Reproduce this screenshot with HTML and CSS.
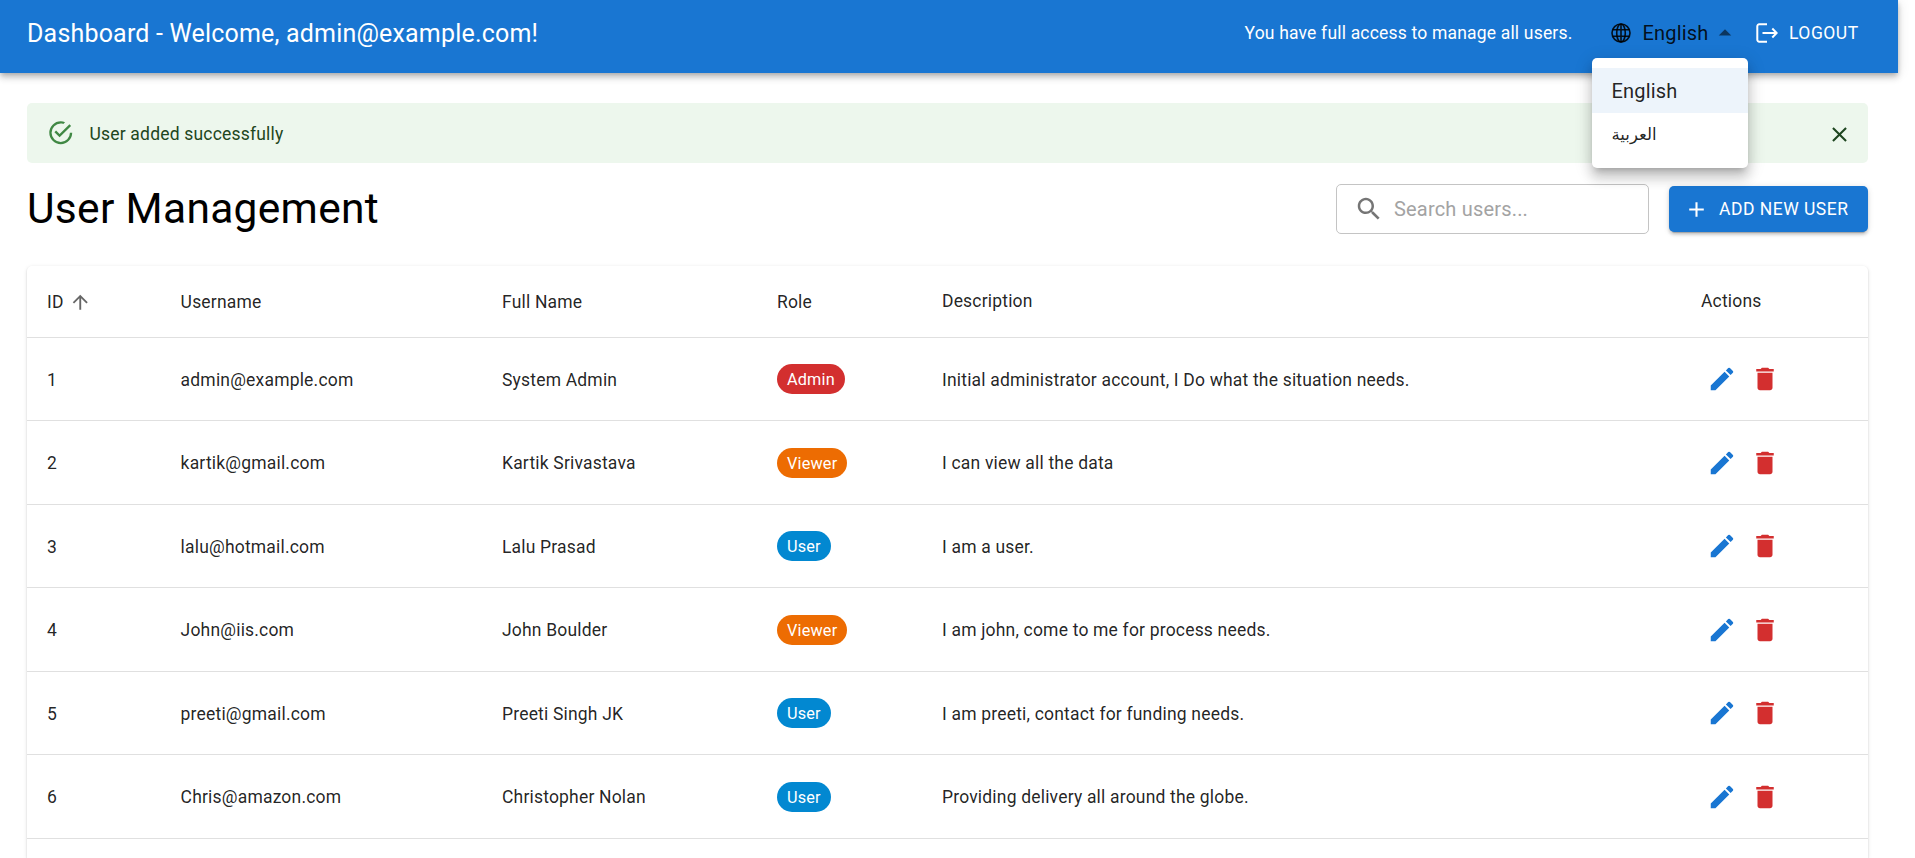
FILE: index.html
```html
<!DOCTYPE html>
<html lang="en">
<head>
<meta charset="utf-8">
<title>Dashboard</title>
<link rel="stylesheet" href="styles.css">
</head>
<body>
<svg class="defs" aria-hidden="true">
  <symbol id="edit" viewBox="0 0 24 24"><path d="M3 17.25V21h3.75L17.81 9.94l-3.75-3.75zM20.71 7.04c.39-.39.39-1.02 0-1.41l-2.34-2.34a.9959.9959 0 0 0-1.41 0l-1.83 1.83 3.75 3.75z"/></symbol>
  <symbol id="delete" viewBox="0 0 24 24"><path d="M6 19c0 1.1.9 2 2 2h8c1.1 0 2-.9 2-2V7H6zM19 4h-3.500l-1-1h-5l-1 1H5v2h14z"/></symbol>
</svg>
<header class="appbar">
  <h6 class="appbar-title">Dashboard - Welcome, admin@example.com!</h6>
  <p class="appbar-note">You have full access to manage all users.</p>
  <div class="lang">
    <svg class="lang-globe" viewBox="0 0 20 20"><circle cx="10" cy="10" r="9"/><ellipse cx="10" cy="10" rx="4.300" ry="9"/><path d="M10 1v18M1.800 6.800h16.400M1.800 13.200h16.400"/></svg>
    <span class="lang-value">English</span>
    <svg class="lang-arrow" viewBox="0 0 24 24"><path d="m7 14 5-5 5 5z"/></svg>
    <ul class="menu">
      <li class="menu-item menu-item-on">English</li>
      <li class="menu-item menu-item-ar">العربية</li>
    </ul>
  </div>
  <button class="logout">
    <svg class="logout-icon" viewBox="0 0 22 20"><path d="M11 1.300H3.200A1.900 1.900 0 0 0 1.300 3.200v13.600a1.900 1.900 0 0 0 1.900 1.900H11M6.500 10h14M16.300 5.500 20.700 10l-4.400 4.500"/></svg>
    LOGOUT
  </button>
</header>
<main class="content">
  <div class="alert">
    <svg class="alert-icon" viewBox="0 0 24 24"><path d="M20 12a8 8 0 0 1-8 8 8 8 0 0 1-8-8 8 8 0 0 1 8-8c.760 0 1.500.110 2.200.310l1.570-1.570A9.822 9.822 0 0 0 12 2 10 10 0 0 0 2 12a10 10 0 0 0 10 10 10 10 0 0 0 10-10M7.910 10.080 6.500 11.500 11 16 21 6l-1.410-1.420L11 13.170z"/></svg>
    <span class="alert-text">User added successfully</span>
    <svg class="alert-close" viewBox="0 0 24 24"><path d="M19 6.410 17.590 5 12 10.590 6.410 5 5 6.410 10.590 12 5 17.590 6.410 19 12 13.410 17.590 19 19 17.590 13.410 12z"/></svg>
  </div>
  <div class="toolbar">
    <h4 class="page-title">User Management</h4>
    <div class="search">
      <svg class="search-icon" viewBox="0 0 24 24"><path d="M15.500 14h-.790l-.280-.270C15.410 12.590 16 11.110 16 9.500 16 5.910 13.090 3 9.500 3S3 5.910 3 9.500 5.910 16 9.500 16c1.610 0 3.090-.590 4.230-1.570l.270.280v.790l5 4.990L20.490 19zm-6 0C7.010 14 5 11.990 5 9.500S7.010 5 9.500 5 14 7.010 14 9.500 11.990 14 9.500 14"/></svg>
      <span class="search-text">Search users...</span>
    </div>
    <button class="add">
      <svg class="add-icon" viewBox="0 0 24 24"><path d="M12 5v14M5 12h14"/></svg>
      ADD NEW USER
    </button>
  </div>
  <div class="paper">
    <div class="row head">
      <span class="sort">ID <svg class="sort-icon" viewBox="0 0 24 24"><path d="m4 12 1.410 1.410L11 7.830V20h2V7.830l5.580 5.590L20 12l-8-8z"/></svg></span><span class="sort">Username</span><span class="sort">Full Name</span><span class="sort">Role</span><span>Description</span><span>Actions</span>
    </div>
    <div class="row"><span>1</span><span>admin@example.com</span><span>System Admin</span><span class="cell-chip"><b class="chip chip-admin">Admin</b></span><span>Initial administrator account, I Do what the situation needs.</span><span class="acts"><svg class="edit"><use href="#edit"/></svg><svg class="del"><use href="#delete"/></svg></span></div>
    <div class="row"><span>2</span><span>kartik@gmail.com</span><span>Kartik Srivastava</span><span class="cell-chip"><b class="chip chip-viewer">Viewer</b></span><span>I can view all the data</span><span class="acts"><svg class="edit"><use href="#edit"/></svg><svg class="del"><use href="#delete"/></svg></span></div>
    <div class="row"><span>3</span><span>lalu@hotmail.com</span><span>Lalu Prasad</span><span class="cell-chip"><b class="chip chip-user">User</b></span><span>I am a user.</span><span class="acts"><svg class="edit"><use href="#edit"/></svg><svg class="del"><use href="#delete"/></svg></span></div>
    <div class="row"><span>4</span><span>John@iis.com</span><span>John Boulder</span><span class="cell-chip"><b class="chip chip-viewer">Viewer</b></span><span>I am john, come to me for process needs.</span><span class="acts"><svg class="edit"><use href="#edit"/></svg><svg class="del"><use href="#delete"/></svg></span></div>
    <div class="row"><span>5</span><span>preeti@gmail.com</span><span>Preeti Singh JK</span><span class="cell-chip"><b class="chip chip-user">User</b></span><span>I am preeti, contact for funding needs.</span><span class="acts"><svg class="edit"><use href="#edit"/></svg><svg class="del"><use href="#delete"/></svg></span></div>
    <div class="row"><span>6</span><span>Chris@amazon.com</span><span>Christopher Nolan</span><span class="cell-chip"><b class="chip chip-user">User</b></span><span>Providing delivery all around the globe.</span><span class="acts"><svg class="edit"><use href="#edit"/></svg><svg class="del"><use href="#delete"/></svg></span></div>
  </div>
</main>
</body>
</html>
```
FILE: styles.css
```css
* { box-sizing: border-box; }
html, body { height: 858px; overflow: hidden; }
body { margin: 0; background: #fff; font-family: Roboto, "Liberation Sans", sans-serif; color: rgba(0,0,0,.87); display: flex; flex-direction: column; }
.defs { display: none; }
h4, h6, p, ul { margin: 0; padding: 0; font-weight: 400; list-style: none; }
button { font: inherit; border: 0; background: none; padding: 0; }
svg { flex: none; fill: currentColor; display: block; }

.appbar {
  width: 1898px; height: 73px; flex: none; padding: 0 39px 7px 27px;
  display: flex; align-items: center; position: relative; z-index: 1;
  background: #1976d2; color: #fff;
  box-shadow: 0 2px 5px -1px rgba(0,0,0,.2), 0 5px 6px rgba(0,0,0,.14), 0 1px 12px rgba(0,0,0,.12);
}
.appbar-title { flex: 1; font-size: 25px; letter-spacing: .0075em; }
.appbar-note { font-size: 17.5px; letter-spacing: .01071em; margin-right: 38.5px; }
.lang { position: relative; display: flex; align-items: center; color: rgba(0,0,0,.87); width: 120.5px; margin-right: 24px; }
.lang-globe { width: 20px; height: 20px; margin-right: 11.5px; fill: none; stroke: currentColor; stroke-width: 1.6; }
.lang-value { font-size: 20px; letter-spacing: .00938em; }
.lang-arrow { width: 30px; height: 30px; margin-left: 1px; color: rgba(0,0,0,.54); }
.menu {
  position: absolute; left: -19.5px; top: 40px; width: 156px; height: 110px; padding: 10px 0; z-index: 2;
  background: #fff; border-radius: 5px;
  box-shadow: 0 6px 6px -4px rgba(0,0,0,.2), 0 10px 12px 1px rgba(0,0,0,.14), 0 4px 17px 2px rgba(0,0,0,.12);
}
.menu-item { height: 45px; line-height: 47px; padding-left: 20px; font-size: 20px; letter-spacing: .00938em; }
.menu-item-on { background: #edf4fb; }
.menu-item-ar { font-family: "Liberation Serif", "DejaVu Sans", serif; font-size: 16.5px; line-height: 43px; letter-spacing: 0; }
.logout { display: flex; align-items: center; font-size: 17.5px; letter-spacing: .02857em; color: #fff; width: 103.5px; white-space: nowrap; }
.logout-icon { width: 22px; height: 20px; margin-right: 11.5px; fill: none; stroke: currentColor; stroke-width: 2; }

.content { flex: 1; min-height: 0; display: flex; flex-direction: column; padding: 30px 0 0 27px; width: 1868px; }
.alert { height: 60px; flex: none; padding: 0 20px; display: flex; align-items: center; background: #edf7ed; border-radius: 5px; color: #1e4620; }
.alert-icon { width: 27.5px; height: 27.5px; margin-right: 15px; color: #2e7d32; opacity: .9; }
.alert-text { flex: 1; padding-top: 2px; font-size: 17.5px; letter-spacing: .01071em; }
.alert-close { width: 25px; height: 25px; margin-top: 3px; margin-right: -4px; }

.toolbar { height: 50px; flex: none; margin: 21px 0 31.5px; display: flex; align-items: center; }
.page-title { flex: 1; font-size: 42.5px; line-height: 50px; letter-spacing: .00735em; color: #000; }
.search { width: 313px; height: 50px; padding-left: 17px; margin-right: 20px; display: flex; align-items: center; border: 1px solid #c4c4c4; border-radius: 5px; }
.search-icon { width: 30px; height: 30px; margin-right: 10px; color: rgba(0,0,0,.54); }
.search-text { font-size: 20px; letter-spacing: .00938em; color: #a3a3a3; }
.add {
  width: 199px; height: 46px; display: flex; align-items: center; padding-left: 15px;
  border-radius: 5px; background: #1976d2; color: #fff; white-space: nowrap;
  font-size: 17.5px; letter-spacing: .02857em;
  box-shadow: 0 4px 1px -3px rgba(0,0,0,.2), 0 3px 3px rgba(0,0,0,.14), 0 1px 6px rgba(0,0,0,.12);
}
.add-icon { width: 25px; height: 25px; margin-right: 10px; stroke: currentColor; stroke-width: 2; }

.paper { flex: 1; min-height: 0; border-radius: 5px 5px 0 0; box-shadow: 0 3px 1px -2px rgba(0,0,0,.1), 0 1px 2px rgba(0,0,0,.14), 0 1px 4px rgba(0,0,0,.1); }
.row {
  display: grid; grid-template-columns: 133.6px 321.4px 275px 165px 759px 187px; align-items: center;
  height: 83.5px; border-bottom: 1px solid #e0e0e0; font-size: 17.5px; letter-spacing: .01071em;
}
.row > span { padding: 2px 0 0 20px; }
.head { height: 72px; }
.head > span { padding-top: 0; }
.head > .sort { display: flex; align-items: center; padding-top: 2px; }
.sort-icon { width: 22.5px; height: 22.5px; margin-left: 5px; color: rgba(0,0,0,.6); }
.row > .cell-chip { display: flex; padding-top: .8px; }
.chip { height: 30px; line-height: 31px; padding: 0 10px; border-radius: 15px; font-size: 16.25px; font-weight: 400; color: #fff; }
.chip-admin { background: #d32f2f; }
.chip-viewer { background: #ed6c02; }
.chip-user { background: #0288d1; }
.row > .acts { display: flex; gap: 13px; padding-top: .8px; }
.acts svg { width: 30px; height: 30px; }
.edit { margin-left: 6px; color: #1976d2; }
.del { color: #d32f2f; }
```
